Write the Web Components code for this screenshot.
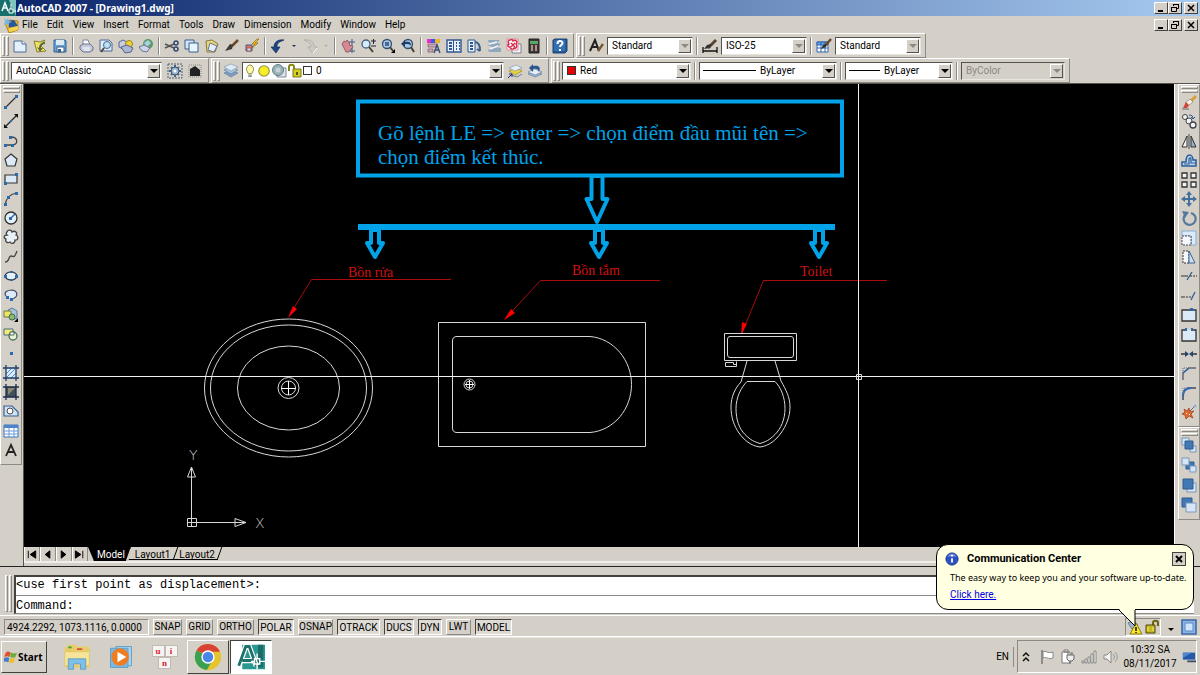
<!DOCTYPE html>
<html lang="en">
<head>
<meta charset="utf-8">
<title>AutoCAD 2007 - [Drawing1.dwg]</title>
<style>
  html, body { height: 100%; }
  body {
    margin: 0;
    background: #d4d0c8;
    color: #000;
    font: 10px/12px Roboto, "Liberation Sans", Arial, sans-serif;
  }
</style>
</head>
<body>
<cad-app></cad-app>

<script>
const ICONS = {
  // standard toolbar
  new: '<path d="M2 3h8l4 3v8H2z" fill="#e4f0fc" stroke="#4a6a94"/><path d="M10 3v3h4" fill="#fff" stroke="#4a6a94"/>',
  open: '<path d="M2 3l6 1 5-2-4 6 5 5-9 1z" fill="#f0e06a" stroke="#8a8030"/><path d="M13 4c-4 0-6 3-6 6l-2-1 3 5 3-4H9c0-2 1-4 4-4z" fill="#5c6a30"/>',
  save: '<path d="M2 2h11l1 1v11H2z" fill="#6aa0d8" stroke="#38608e"/><path d="M4 2h8v5H4z" fill="#dceaf6"/><path d="M5 9h7v5H5z" fill="#fff" stroke="#38608e"/><path d="M6 11h3v3H6z" fill="#38608e"/>',
  plot: '<path d="M5 2h5l2 5H5z" fill="#fff" stroke="#7a86a0"/><path d="M2 8l3-2h7l3 3v3l-3 2H5l-3-3z" fill="#c4cadc" stroke="#6a7698"/><path d="M5 10h7M6 12h6" stroke="#fff"/>',
  preview: '<path d="M2 2h9l3 3v8H2z" fill="#dceafa" stroke="#4a6a94"/><circle cx="9" cy="7" r="3.500" fill="#bfe0f6" stroke="#4b6a84"/><path d="M6 10l-3 4" stroke="#5a4632" stroke-width="2"/>',
  publish: '<path d="M1 4l4-2 4 2 1 4-5 3-4-2z" fill="#c9cfe0" stroke="#56658c"/><circle cx="11" cy="6" r="3.500" fill="#f2d230" stroke="#9a8420"/><path d="M3 9l6-2 6 3-2 4-6 1z" fill="#aab6d2" stroke="#56658c"/>',
  dwf: '<circle cx="10" cy="6" r="5" fill="#5c9a68"/><path d="M6 5l4-3 3 3-4 4z" fill="#a8d0e0"/><path d="M1 9l5-2 6 3-3 4-5-1z" fill="#cdd6e8" stroke="#6a7698"/>',
  cut: '<path d="M1 6l9 4M1 10l9-4" stroke="#555" stroke-width="1.500"/><circle cx="12" cy="5" r="2" fill="none" stroke="#304a70" stroke-width="1.500"/><circle cx="12" cy="11" r="2" fill="none" stroke="#304a70" stroke-width="1.500"/>',
  copy: '<path d="M1 2h9v9H1z" fill="#d4e4f8" stroke="#38608e"/><path d="M5 5h9v9H5z" fill="#e8f4ff" stroke="#38608e"/>',
  paste: '<path d="M2 3l6-1 6 4-3 8H3z" fill="#e8d878" stroke="#86793a"/><path d="M6 5l7 3-3 6-6-2z" fill="#e4eefa" stroke="#6a7698"/>',
  brush: '<path d="M14 2l-6 6" stroke="#6a4a28" stroke-width="2.500"/><path d="M9 7L6 6l-5 7 7-2z" fill="#3e3a34"/>',
  block: '<path d="M13 1L8 6h3L7 11l7-6h-3l4-4z" fill="#f6cc1c" stroke="#8e6410" stroke-width=".7"/><path d="M2 7h6v6H2z" fill="#e8735a" stroke="#3c5c94"/><path d="M3 10h4v3H3z" fill="#c9d8ee" stroke="#9a4530" stroke-width=".7"/>',
  undo: '<path d="M14 2C8 1 4 4 4 9H1l5 6 4-6H7c0-4 2-5 7-7z" fill="#1c4480" stroke="#12305c" stroke-width=".7"/>',
  redo: '<path d="M2 2c7-1 10 2 10 7h3l-5 6-4-6h3c0-4-2-5-7-7z" fill="#cfccc4" stroke="#a8a59e" stroke-width=".7"/><path d="M15 10l-4 5" stroke="#fff"/>',
  pan: '<path d="M2 6l2-3 2 1 1-2 2 2 1 4 2-1 1 2-4 5H6z" fill="#d48a92" stroke="#8e4650" stroke-width=".8"/><path d="M12 1v6M9 4h6M12 10v5M10 13h5" stroke="#3c5a88"/>',
  zoom: '<circle cx="6" cy="6" r="4" fill="#d6ecfa" stroke="#4b5f78" stroke-width="1.300"/><path d="M9 9l4 5" stroke="#4a4036" stroke-width="2"/><path d="M11 3h5M13.500 1v5M11 8h5" stroke="#223"/>',
  zoomWindow: '<circle cx="7" cy="6" r="4.500" fill="#a8c8e8" stroke="#34506e" stroke-width="1.300"/><path d="M5 4h4v4H5z" fill="#4a6a94"/><path d="M10 9l3 4" stroke="#4a4036" stroke-width="2"/><path d="M15 11v4h-4z" fill="#000"/>',
  zoomBack: '<circle cx="8" cy="6" r="4.500" fill="#a8c8e8" stroke="#34506e" stroke-width="1.300"/><path d="M1 6l4-4v2c5-1 6 1 6 4-1-2-3-2-6-2v3z" fill="#1f3c66"/><path d="M11 9l3 5" stroke="#4a4036" stroke-width="2"/>',
  props: '<path d="M1 1h4v4H1z" fill="#e62ec8"/><path d="M5 1h4v4H5z" fill="#3c5ae0"/><path d="M9 1h5v4H9z" fill="#efb02c"/><path d="M2 6h9v3H2zM2 11h5v3H2z" fill="#c8aab8" stroke="#80526a" stroke-width=".7"/><path d="M8 15l3-8 3 8M9 12h4" fill="none" stroke="#3a4a70" stroke-width="1.400"/>',
  design: '<path d="M1 2h14v12H1z" fill="#e6f0fc" stroke="#2f568e" stroke-width="1.400"/><path d="M7.500 2v12" stroke="#2f568e"/><path d="M3 5h3M3 8h3M3 11h3M10 5h1M13 5h1M10 8h1M13 8h1M10 11h1M13 11h1" stroke="#2f568e" stroke-width="2"/>',
  palettes: '<path d="M2 2h7v12H2z" fill="#e6f0fc" stroke="#2f568e"/><path d="M4 5h3M4 8h3M4 11h3" stroke="#2f568e" stroke-width="2"/><path d="M9 4c3 0 5 3 5 9M14 13l-3-2" fill="none" stroke="#38608e" stroke-width="2"/>',
  sheets: '<path d="M2 2h12l-3 3H3zM1 7l10-2 4 1-6 4zM2 12l8-3 5 1v4H3z" fill="#8fa8bc"/><path d="M3 6l8-2M4 11l8-3" stroke="#eef4fa" stroke-width="1.500"/>',
  markup: '<path d="M6 6h9v9H6z" fill="#f2f2f2" stroke="#7a8298"/><path d="M1 1h11v11H1z" fill="#fff" stroke="#d88a98"/><path d="M4 2c2-1 3 0 3 1 3-2 5 1 3 3 2 2 0 5-2 4-1 2-4 1-4-1-2 0-3-2-1-3-1-2-1-4 1-4zM5 5l4 4M9 5L5 9" fill="none" stroke="#d82a4a" stroke-width="1.400"/>',
  calc: '<path d="M3 1h10v14H3z" fill="#3c3838" stroke="#222"/><path d="M4 3h8v3H4z" fill="#58a868"/><path d="M5 8h2M9 8h2M5 10h2M9 10h2M5 12h2M9 12h2" stroke="#dcb0a0" stroke-width="1.300"/>',
  help: '<path d="M1 2l2-1h12v12l-2 2H1z" fill="#245a98" stroke="#1c4474"/><path d="M2 2h11v11H2z" fill="#3470b4"/><path d="M5.500 6c0-4 5-3.500 5-1 0 2-2.500 2-2.500 4" fill="none" stroke="#fff" stroke-width="2"/><path d="M7 11h2v2H7z" fill="#fff"/>',
  textStyle: '<path d="M2 13L7 2l4 11M4 9h6" fill="none" stroke="#222" stroke-width="2"/><path d="M15 6l-5 7" stroke="#7a5834" stroke-width="2.500"/>',
  dimStyle: '<path d="M14 2L6 10" stroke="#5a4630" stroke-width="3"/><path d="M9 6L5 7l-3 4 6-1z" fill="#333"/><path d="M1 9v6M15 9v6M1 13h14" stroke="#111" stroke-width="1.300"/>',
  tableStyle: '<path d="M1 4h11v10H1z" fill="#fff" stroke="#2f66ae"/><path d="M1 4h11v3H1zM5 4v10M9 4v10M1 10h11" fill="#6a9ade" stroke="#2f66ae"/><path d="M15 1L9 8" stroke="#6a4a28" stroke-width="2.500"/><path d="M10 6l-3 1-2 4 5-2z" fill="#333"/>',
  // layers toolbar
  gear: '<path d="M1 1h14v14H1z" fill="none" stroke="#46627e" stroke-dasharray="2 1"/><path d="M8 2v12M2 8h12M4 4l8 8M12 4l-8 8" stroke="#4a6484" stroke-width="2"/><circle cx="8" cy="8" r="4" fill="#9cb6cc" stroke="#3c5674"/><circle cx="8" cy="8" r="1.500" fill="#fff"/>',
  myWorkspace: '<path d="M2 2h12v12H2z" fill="none" stroke="#888" stroke-dasharray="1 1"/><path d="M3 6l5-3 5 4v6H3z" fill="#222"/>',
  layers: '<path d="M1 10l7-3 7 3-7 4z" fill="#7f9fc0" stroke="#58789a" stroke-width=".6"/><path d="M1 7l7-3 7 3-7 4z" fill="#a8c2dc" stroke="#58789a" stroke-width=".6"/><path d="M1 4l7-3 7 3-7 4z" fill="#e0ebf5" stroke="#7890aa" stroke-width=".6"/>',
  layerCurrent: '<path d="M2 8l7-3 6 3-7 4z" fill="#e4d23c" stroke="#8a7c20" stroke-width=".6"/><path d="M2 5l7-3 6 3-7 3z" fill="#e6eef6" stroke="#7890aa" stroke-width=".6"/><path d="M4 12l6 2 5-3" fill="none" stroke="#6d8198"/><path d="M1 15l4-4M2 11h3v3" fill="none" stroke="#222a80"/>',
  layerBack: '<path d="M1 11l7-3 7 3-7 3z" fill="#9cb6d0" stroke="#58789a" stroke-width=".6"/><path d="M1 9l7-3 7 3-7 3z" fill="#e6eef6" stroke="#58789a" stroke-width=".6"/><path d="M6 1L2 5l4 4V6c4-1 5 0 6 3 2-5 0-7-6-6z" fill="#2d568e"/>',
  bulb: '<path d="M8 1a5 5 0 0 1 3 8l-1 2H6L5 9a5 5 0 0 1 3-8z" fill="#fdf9a8" stroke="#8a8440"/><path d="M6 12h4v3H6z" fill="#9a9a94"/>',
  sun: '<circle cx="8" cy="8" r="6" fill="#f8ee28" stroke="#94903c" stroke-width="1.300"/>',
  vpFreeze: '<path d="M6 5h9v9H6z" fill="#dfe4ea" stroke="#7e8c9a"/><circle cx="7" cy="7" r="5.500" fill="#98b2b8" stroke="#64808a"/><circle cx="7" cy="7" r="2.500" fill="#c6d4d4"/>',
  unlock: '<path d="M2 8V4c0-3 5-3 5 0v3" fill="none" stroke="#8a8618" stroke-width="2"/><path d="M6 6h8v8H6z" fill="#d8d020" stroke="#77741a"/><path d="M9 9h2v3H9z" fill="#5a5810"/>',
  // draw toolbar
  line: '<path d="M3 13L13 3" stroke="#333" stroke-width="1.200"/><path d="M1 12h3v3H1zM12 1h3v3h-3z" fill="#2c6ab0"/>',
  xline: '<path d="M2 14L14 2" stroke="#222" stroke-width="1.300"/><path d="M1 15v-4l4 4zM15 1v4l-4-4z" fill="#111"/><path d="M7 7h2v2H7z" fill="#2c6ab0"/>',
  pline: '<path d="M2 12h7M9 12c7 0 6-8-1-8" fill="none" stroke="#444" stroke-width="1.300"/><path d="M1 11h3v3H1zM8 11h3v3H8zM6 3h3v3H6z" fill="#2c6ab0"/>',
  polygon: '<path d="M8 2l6 5-2 7H4L2 7z" fill="#dceaf8" stroke="#333" stroke-width="1.200"/>',
  rect: '<path d="M2 4h12v8H2z" fill="#dceaf8" stroke="#333" stroke-width="1.200"/><path d="M1 11h3v3H1zM12 2h3v3h-3z" fill="#2c6ab0"/>',
  arc: '<path d="M2 14C3 7 7 3 14 2" fill="none" stroke="#444" stroke-width="1.200"/><path d="M1 12h3v3H1zM4 5h3v3H4zM12 1h3v3h-3z" fill="#2c6ab0"/>',
  circle: '<circle cx="8" cy="8" r="6" fill="#e4f0fa" stroke="#333" stroke-width="1.300"/><path d="M8 8l4-4" stroke="#2c6ab0" stroke-width="1.500"/><path d="M6 7h3v3H6z" fill="#2c6ab0"/>',
  cloud: '<path d="M4 3c1-3 5-2 5 0 3-2 6 1 4 3 3 1 2 6-1 5 0 4-4 4-5 2-3 2-5-1-4-3-3-1-2-4 1-4-1-1-1-2 0-3z" fill="#e8f0f8" stroke="#444" stroke-width="1.300"/>',
  spline: '<path d="M2 13c5 0 3-6 6-6s3 3 6-5" fill="none" stroke="#444" stroke-width="1.300"/>',
  ellipse: '<ellipse cx="8" cy="8" rx="6" ry="4" fill="#e4f0fa" stroke="#333" stroke-width="1.200"/><path d="M1 7h3v3H1zM12 7h3v3h-3zM7 3h3v2H7zM7 11h3v2H7z" fill="#2c6ab0"/>',
  ellipseArc: '<path d="M3 9C0 5 5 3 9 3c6 1 7 7 0 9" fill="#dceaf8" stroke="#446" stroke-width="1.200"/><path d="M3 9h3v3H3zM7 11h3v3H7z" fill="#2c6ab0"/>',
  insert: '<path d="M5 3l4-2 5 3v7l-5 2z" fill="#a8c4dc" stroke="#58789a"/><path d="M1 4h7v6H1z" fill="#f0e46a" stroke="#6a7a38"/><circle cx="9" cy="10" r="3" fill="#8fb86e" stroke="#406a50"/><path d="M15 11v4h-4z"/>',
  makeBlock: '<path d="M1 3h9v6H1z" fill="#f4ec70" stroke="#446a8a"/><circle cx="10" cy="10" r="4" fill="#e8f0d8" stroke="#446a5a" stroke-width="1.300"/><path d="M7 6h4v3H7z" fill="#fff" stroke="#446a5a"/>',
  point: '<path d="M7 7h3v3H7z" fill="#2c6ab0"/>',
  hatch: '<path d="M3 3h10v10H3z" fill="#dcecfc"/><path d="M3 9l6-6M4 12l8-8M8 13l5-5" stroke="#4c8ccc"/><path d="M3 0v16M13 0v16M0 3h16M0 13h16" stroke="#1e3c66" stroke-width="1.300"/>',
  gradient: '<path d="M3 3h10v10H3z" fill="#444e58"/><path d="M5 4h7L5 11z" fill="#8a8a70"/><path d="M3 0v16M13 0v16M0 3h16M0 13h16" stroke="#1c2c4c" stroke-width="1.300"/>',
  region: '<path d="M1 3h8l6 6v4H1z" fill="#cfe2f6" stroke="#38608e" stroke-width="1.200"/><circle cx="7" cy="8" r="3" fill="#fff" stroke="#444"/>',
  table: '<path d="M1 2h14v12H1z" fill="#fff" stroke="#3b72b8"/><path d="M1 2h14v3H1z" fill="#4c84cc"/><path d="M1 8h14M1 11h14M6 5v9M11 5v9" stroke="#6a9ade"/>',
  mtext: '<path d="M3 14L8 3l5 11M5 10h6" fill="none" stroke="#222" stroke-width="1.800"/>',
  // modify toolbar
  erase: '<path d="M15 2L9 8" stroke="#d8a030" stroke-width="3"/><path d="M9 5l3 3-5 4-3-3z" fill="#f2f0e0" stroke="#777" stroke-width=".6"/><path d="M5 8l3 3-2 3H2z" fill="#d04438"/><path d="M1 15h7" stroke="#666"/>',
  copyObj: '<circle cx="4" cy="4" r="2.500" fill="#eef4fa" stroke="#444"/><circle cx="8" cy="8" r="3" fill="#eef4fa" stroke="#444"/><path d="M8 2c3 0 4 1 4 4M10 4l2 2 2-2" fill="none" stroke="#2a5c98"/><circle cx="12" cy="12" r="3" fill="#eef4fa" stroke="#444" stroke-width="1.300"/>',
  mirror: '<path d="M1 14L6 3v11z" fill="#eef4fa" stroke="#333"/><path d="M15 14L10 3v11z" fill="#8fb0d0" stroke="#333"/><path d="M8 1v15" stroke="#444"/>',
  offset: '<path d="M1 14v-4h4c0-10 7-8 7-2h3v6z" fill="#bcd4ec" stroke="#2a5c98" stroke-width="1.500"/><path d="M3 12h5V7c1-2 2-1 2 0v4h5" fill="none" stroke="#2a5c98" stroke-width="1.200"/>',
  array: '<path d="M1 1h5v5H1zM10 1h5v5h-5zM1 10h5v5H1zM10 10h5v5h-5z" fill="#eef4fa" stroke="#333" stroke-width="1.300"/>',
  move: '<path d="M8 0l3 4H9v3h3V5l4 3-4 3V9H9v3h2l-3 4-3-4h2V9H4v2L0 8l4-3v2h3V4H5z" fill="#44709e"/>',
  rotate: '<path d="M4 5a6 6 0 1 0 6-2" fill="none" stroke="#54789e" stroke-width="2.200"/><path d="M1 1l7 1-4 6z" fill="#54789e"/>',
  scale: '<path d="M1 1h14v14h-5V6H1z" fill="#dceaf8" stroke="#8cacd0"/><path d="M1 6h9v9H1z" fill="#f4f8fc" stroke="#445" stroke-dasharray="2 1"/>',
  stretch: '<path d="M2 2h6v12H2z" fill="#f4f8fc" stroke="#333" stroke-dasharray="2 1"/><path d="M8 2l6 12H8z" fill="#cfe0f2" stroke="#3b628e"/>',
  trim: '<path d="M0 8h7" stroke="#333"/><path d="M9 8h7" stroke="#333" stroke-dasharray="2 1"/><path d="M6 12l5-8" stroke="#2a5c98" stroke-width="1.300"/>',
  extend: '<path d="M0 9h4" stroke="#333"/><path d="M5 9h5" stroke="#333" stroke-dasharray="2 1"/><path d="M10 12l4-8" stroke="#2a5c98" stroke-width="1.300"/>',
  breakAt: '<path d="M1 3h14v11H1z" fill="#dceaf8" stroke="#333" stroke-width="1.300"/><path d="M9 1h3v3H9z" fill="#2c6ab0"/>',
  break: '<path d="M5 3H1v11h14V3h-4" fill="#dceaf8" stroke="#333" stroke-width="1.300"/><path d="M4 1h2v3H4zM10 1h2v3h-2z" fill="#2c6ab0"/>',
  join: '<path d="M0 8h5M11 8h5" stroke="#333" stroke-width="1.300"/><path d="M4 5l4 3-4 3zM12 5L8 8l4 3z" fill="#24466c"/>',
  chamfer: '<path d="M2 15V8l6-5h7" fill="none" stroke="#667" stroke-width="1.500"/><path d="M2 8V3h6" fill="none" stroke="#667" stroke-dasharray="1 1"/><path d="M2 8l6-5" stroke="#2c6ab0" stroke-width="1.500"/>',
  fillet: '<path d="M2 15v-4c0-5 3-8 8-8h5" fill="none" stroke="#446" stroke-width="1.500"/><path d="M2 11c0-5 3-8 8-8" fill="none" stroke="#2c6ab0" stroke-width="2"/><path d="M2 8V3h5" fill="none" stroke="#778" stroke-dasharray="1 1"/>',
  explode: '<path d="M3 5l3 2 2-3 1 4 4-1-3 3 2 4-4-2-3 3-1-4-3-1 3-2z" fill="#e06a2c" stroke="#a03818" stroke-width=".7"/><path d="M5 9h1v1H5zM8 10h1v1H8z" fill="#fff"/><path d="M9 7l5-5" stroke="#668"/><circle cx="14" cy="2" r="1.500" fill="#8fb0d0"/>',
  front: '<path d="M1 1h7v7H1zM9 9h6v6H9z" fill="#d6e6f6" stroke="#7896b8"/><path d="M4 4h8v8H4z" fill="#4278b4" stroke="#2f5c90"/>',
  back: '<path d="M5 5h8v7H5z" fill="#4278b4" stroke="#2f5c90"/><path d="M1 1h7v7H1zM9 9h6v6H9z" fill="#d6e6f6" stroke="#7896b8"/>',
  above: '<path d="M6 6h9v9H6z" fill="#d6e6f6" stroke="#7896b8"/><path d="M2 2h10v10H2z" fill="#4278b4" stroke="#2f5c90"/>',
  under: '<path d="M1 1h10v9H1z" fill="#4278b4" stroke="#2f5c90"/><path d="M5 6h10v9H5z" fill="#d6e6f6" stroke="#7896b8"/>',
  // window furniture
  logo: '<path d="M0 0h16v16H0z" fill="#18706e"/><path d="M9 0h7v16z" fill="#7cc4bc"/><path d="M2 11L5 3l3 8M3 8h4" fill="none" stroke="#fff" stroke-width="1.500"/><path d="M9 9h4v4H9zM11 4v5M13 11h3" fill="none" stroke="#fff"/>',
  drawing: '<path d="M2 6l5-3 8 1v9l-9 3z" fill="#f0b820" stroke="#a87810" stroke-width=".8"/><path d="M5 4l6-1 4 6-9 2z" fill="#2c569a"/><path d="M6 11l9-2v4l-9 2z" fill="#f6d050"/><path d="M1 1l2 2 2-2 1 3 3 1-3 1v3L4 7 1 8l1-3z" fill="#7ab8e0"/>',
  info: '<circle cx="8" cy="8" r="7" fill="#2c50c0" stroke="#1c3a90"/><path d="M3 5a6 6 0 0 1 10 0" fill="#7c9ae8"/><path d="M8 3v2M8 7v5" stroke="#fff" stroke-width="2"/>',
  warning: '<path d="M2 4l5-2 5 4-6 4z" fill="#9cb6cc" stroke="#67829c"/><path d="M10 4l6 11H4z" fill="#f8e428" stroke="#8e7c10"/><path d="M10 8v4M10 13v1" stroke="#111" stroke-width="1.500"/>',
  padlock: '<path d="M9 7V4c0-3 5-3 5 0v3" fill="none" stroke="#6a6410" stroke-width="2"/><path d="M2 6h9v8H2z" fill="#c8b820" stroke="#4d4908"/><path d="M4 8v4M9 8v4" stroke="#f4ec8c"/>',
  cleanScreen: '<path d="M1 1h14v14H1z" fill="#8ab4e4" stroke="#3c6aa8" stroke-width="1.600"/><path d="M4 4h8v8H4z" fill="#cfe4fa" stroke="#5c8ac4"/>',
  // taskbar
  windows: '<path d="M2 3c2-2 3-1 6 0L6 8C4 7 3 7 0 8z" fill="#e0512a"/><path d="M8 3c3 1 5 1 7 0l-2 5c-2 1-4 1-6 0z" fill="#6cae3a"/><path d="M0 9c3-1 4-1 6 0l-1 5c-2-1-4-1-6 0z" fill="#3c7cc8"/><path d="M7 9c2 1 4 1 6 0l-2 5c-2 1-4 1-5 0z" fill="#f0bc28"/>',
  explorer: '<path d="M1 3l2-2h4l1 1h7v12H1z" fill="#e8cc68"/><path d="M1 5h13l1-1v9H1z" fill="#f6e49a" stroke="#d8b850" stroke-width=".3"/><path d="M3 2h2v1H3z" fill="#42a040"/><path d="M8 3h3v1H8z" fill="#d8503c"/><path d="M3 15V9h10v6h-3v-3H6v3z" fill="#7cc0e8" stroke="#5090bc" stroke-width=".4"/>',
  media: '<path d="M5 2h9v11H5z" fill="#a8d4f0" stroke="#5c9cc4" stroke-width=".5"/><path d="M2 3h10v11H2z" fill="#78b8e4" stroke="#5c9cc4" stroke-width=".5"/><circle cx="7.500" cy="8" r="5" fill="#ee7c20"/><path d="M6 5l5 3-5 3z" fill="#fff"/>',
  chrome: '<circle cx="8" cy="8" r="7.500" fill="#e8c42c"/><path d="M8 8L1.500 4.200A7.500 7.500 0 0 1 14.800 5H8z" fill="#da4334"/><path d="M1.500 4.200a7.500 7.500 0 0 0 5.800 11.250L10.500 10z" fill="#3aa052"/><circle cx="8" cy="8" r="3.800" fill="#fff"/><circle cx="8" cy="8" r="3" fill="#4a86e8"/>',
  acad: '<path d="M3 1h13v14H3z" fill="#2a9890"/><path d="M12 1h3v13h-3z" fill="#1c6c68"/><path d="M1 13L5 2h2l4 11M3 10h6" fill="none" stroke="#fff" stroke-width="3"/><path d="M1 13L5 2h2l4 11M3 10h6" fill="none" stroke="#1d706c" stroke-width="1.600"/><path d="M10 9h3v3h-3zM11.500 6v3M11.500 12v3M8 10.500h2M13 10.500h3" fill="none" stroke="#fff" stroke-width=".8"/>',
  chevrons: '<path d="M5 7l3-3 3 3M5 12l3-3 3 3" fill="none" stroke="#111" stroke-width="1.500"/>',
  flag: '<path d="M3 1v14" stroke="#777" stroke-width="1.500"/><path d="M4 3c3-2 4 2 10 0v6c-5 2-6-2-10 0z" fill="#fff" stroke="#888"/>',
  power: '<path d="M2 3h8v11H2zM4 1h4v2H4z" fill="#fff" stroke="#777"/><path d="M7 6h7v4l-2 2H9l-2-2zM8 3v3M12 3v3M10 12v3" fill="#eee" stroke="#666"/>',
  network: '<path d="M1 12h2v2H1zM4 10h2v4H4zM7 8h2v6H7zM10 5h2v9h-2zM13 2h2v12h-2z" fill="#f4f4f0" stroke="#777" stroke-width=".8"/>',
  sound: '<path d="M2 6h3l4-4v12l-4-4H2z" fill="#f4f4f0" stroke="#888"/><path d="M11 5c2 2 2 4 0 6M13 3c3 3 3 7 0 10" fill="none" stroke="#999"/>',
  desktop: '<path d="M1 3h14v8H1z" fill="#2458a8"/><path d="M1 3h10L1 9z" fill="#4c88d0"/><path d="M6 12h10v2H6z" fill="#384c6c"/>'
};

// Base class: clones the element's template into an open shadow root
class CadElement extends HTMLElement {
  constructor() {
    super();
    const tpl = document.createElement('template');
    tpl.innerHTML = `
      <style>
        :host { display: block; box-sizing: border-box; }
        *, *::before { box-sizing: border-box; }
        button { font: inherit; color: inherit; margin: 0; padding: 0; background: #d4d0c8; border: 0; }
      </style>
      ${this.render()}`;
    this.attachShadow({ mode: 'open' }).appendChild(tpl.content.cloneNode(true));
  }

  render() { return '<slot></slot>'; }
}

class CadIcon extends CadElement {
  render() {
    return `
      <style>
        :host { flex: none; width: 16px; height: 16px; }
        svg { display: block; width: 100%; height: 100%; }
      </style>
      <svg viewBox="0 0 16 16" aria-hidden="true">${ICONS[this.getAttribute('name')] || ''}</svg>`;
  }
}

class ToolButton extends CadElement {
  render() {
    const icon = this.getAttribute('icon');
    return `
      <style>
        :host { flex: none; width: 20px; }
        button { width: 100%; display: flex; justify-content: center; align-items: center; }
        button:hover { outline: 1px solid #fff; }
      </style>
      <button type="button" aria-label="${icon}"><cad-icon name="${icon}"></cad-icon></button>`;
  }
}

// Small black triangle beside undo and redo
class DropArrow extends CadElement {
  render() {
    return `
      <style>
        :host { flex: none; width: 12px; color: #16305c; }
        :host([disabled]) { color: #b4b0a8; }
        button { display: flex; justify-content: center; width: 100%; color: inherit; }
        i { border: 2px solid transparent; border-top-color: currentColor; border-bottom: 0; }
      </style>
      <button type="button" aria-label="history"><i></i></button>`;
  }
}

class ToolSep extends CadElement {
  render() {
    return `
      <style>
        :host { flex: none; width: 2px; height: 18px; margin: 0 2px; background: #8c8a84; border-right: 1px solid #fff; }
      </style>`;
  }
}

class ToolBar extends CadElement {
  render() {
    return `
      <style>
        :host {
          display: flex; align-items: center; flex: none; height: 25px; padding-right: 3px;
          border: 1px solid; border-color: #fff #8c8a84 #8c8a84 #fff;
        }
        .grip { width: 8px; height: 20px; margin-right: 1px; display: flex; gap: 1px; padding-left: 1px; }
        .grip i { width: 3px; border: 1px solid; border-color: #fff #8c8a84 #8c8a84 #fff; }
      </style>
      <div class="grip"><i></i><i></i></div>
      <slot></slot>`;
  }
}

class ComboBox extends CadElement {
  render() {
    const off = this.hasAttribute('disabled') ? 'disabled' : '';
    return `
      <style>
        :host {
          flex: none; display: flex; align-items: center; height: 18px; background: #fff;
          border: 1px solid; border-color: #55534e #e8e6e0 #e8e6e0 #55534e; margin: 0 1px;
        }
        :host([disabled]) { background: #d4d0c8; color: #8c8a84; }
        select {
          appearance: none; flex: 1; min-width: 0; height: 16px; border: 0; padding: 0 4px;
          background: transparent; font: inherit; color: inherit; opacity: 1; outline: 0;
        }
        .arrow {
          width: 13px; height: 14px; margin-right: 1px; background: #d4d0c8; display: flex;
          align-items: center; justify-content: center; pointer-events: none;
          border: 1px solid; border-color: #fff #55534e #55534e #fff;
        }
        .arrow i { border: 4px solid transparent; border-top-color: #000; border-bottom: 0; }
        :host([dim]) .arrow i, :host([disabled]) .arrow i { border-top-color: #8c8a84; }
      </style>
      <slot></slot>
      <select aria-label="${this.getAttribute('label')}" ${off}><option>${this.getAttribute('value')}</option></select>
      <span class="arrow"><i></i></span>`;
  }
}

// Minimize / restore / close group
class WindowButtons extends CadElement {
  render() {
    return `
      <style>
        :host { display: flex; padding-right: 2px; }
        button {
          width: 14px; height: 12px; display: grid; place-items: center;
          border: 1px solid; border-color: #fff #44423e #44423e #fff;
        }
        button:last-child { margin-left: 2px; }
        svg { width: 10px; height: 10px; display: block; }
      </style>
      <button type="button" aria-label="Minimize"><svg viewBox="0 0 10 10"><path d="M2 8h5" stroke="#000" stroke-width="2"/></svg></button>
      <button type="button" aria-label="Restore"><svg viewBox="0 0 10 10"><path d="M3.500 3V1.500h5v4H7M3 1.500h6M1.500 4.500h5v4h-5zM1 4.500h6" fill="none" stroke="#000"/></svg></button>
      <button type="button" aria-label="Close"><svg viewBox="0 0 10 10"><path d="M2 2l6 6M8 2L2 8" stroke="#000" stroke-width="1.500"/></svg></button>`;
  }
}

class TitleBar extends CadElement {
  render() {
    return `
      <style>
        :host {
          display: flex; align-items: center; gap: 1px; height: 16px;
          background: linear-gradient(90deg, #0a246a, #a6caf0); color: #fff;
          font: bold 10px/16px "Noto Sans", sans-serif;
        }
        span { flex: 1; white-space: nowrap; }
      </style>
      <cad-icon name="logo"></cad-icon>
      <span><slot></slot></span>
      <window-buttons></window-buttons>`;
  }
}

class MenuBar extends CadElement {
  render() {
    const menus = ['File', 'Edit', 'View', 'Insert', 'Format', 'Tools', 'Draw', 'Dimension', 'Modify', 'Window', 'Help'];
    return `
      <style>
        :host { display: flex; align-items: center; height: 17px; padding-left: 3px; }
        nav { flex: 1; display: flex; gap: 9px; padding-left: 3px; }
      </style>
      <cad-icon name="drawing"></cad-icon>
      <nav>${menus.map(m => `<button type="button">${m}</button>`).join('')}</nav>
      <window-buttons></window-buttons>`;
  }
}

const tools = names => names.split(' ').map(n => {
  if (n === '|') return '<tool-sep></tool-sep>';
  if (n === 'v') return '<drop-arrow></drop-arrow>';
  if (n === 'x') return '<drop-arrow disabled></drop-arrow>';
  return `<tool-button icon="${n}"></tool-button>`;
}).join('');

class ToolRows extends CadElement {
  render() {
    return `
      <style>
        .row { display: flex; gap: 2px; }
        .w86 { width: 86px; }
        .ws { width: 151px; margin-right: 3px; }
        .layer { width: 262px; }
        .color { width: 129px; }
        .ltype { width: 138px; }
        .lweight { width: 108px; }
        .plot { width: 104px; }
        .swatch { width: 9px; height: 9px; margin-left: 4px; border: 1px solid #333; background: #fff; }
        .red { background: #e80000; }
        .rule { width: 53px; height: 1px; margin-left: 3px; background: #000; }
        .short { width: 31px; }
        .state { width: 14px; height: 14px; }
      </style>
      <div class="row">
        <tool-bar>
          ${tools('new open save | plot preview publish dwf | cut copy paste brush block | undo v redo x | pan zoom zoomWindow zoomBack | props design palettes sheets markup calc | help')}
        </tool-bar>
        <tool-bar>
          ${tools('textStyle')}<combo-box class="w86" dim label="Text style" value="Standard"></combo-box>
          ${tools('| dimStyle')}<combo-box class="w86" dim label="Dimension style" value="ISO-25"></combo-box>
          ${tools('| tableStyle')}<combo-box class="w86" dim label="Table style" value="Standard"></combo-box>
        </tool-bar>
      </div>
      <div class="row">
        <tool-bar>
          <combo-box class="ws" label="Workspace" value="AutoCAD Classic"></combo-box>
          ${tools('gear myWorkspace')}
        </tool-bar>
        <tool-bar>
          ${tools('layers')}
          <combo-box class="layer" label="Layer" value="0">
            <cad-icon class="state" name="bulb"></cad-icon>
            <cad-icon class="state" name="sun"></cad-icon>
            <cad-icon name="vpFreeze"></cad-icon>
            <cad-icon name="unlock"></cad-icon>
            <span class="swatch" style="margin-left: 0"></span>
          </combo-box>
          ${tools('layerCurrent layerBack')}
        </tool-bar>
        <tool-bar>
          <combo-box class="color" label="Color" value="Red"><span class="swatch red"></span></combo-box>
          <tool-sep></tool-sep>
          <combo-box class="ltype" label="Linetype" value="ByLayer"><span class="rule"></span></combo-box>
          <tool-sep></tool-sep>
          <combo-box class="lweight" label="Lineweight" value="ByLayer"><span class="rule short"></span></combo-box>
          <tool-sep></tool-sep>
          <combo-box class="plot" disabled label="Plot style" value="ByColor"></combo-box>
        </tool-bar>
      </div>`;
  }
}

class ToolPalette extends CadElement {
  render() {
    return `
      <style>
        :host {
          display: flex; flex-direction: column; align-items: center; width: 22px; padding-bottom: 6px;
          border: 1px solid; border-color: #fff #8c8a84 #8c8a84 #fff;
        }
        .grip { height: 8px; width: 17px; display: grid; gap: 1px; padding: 1px 0; }
        .grip i { height: 3px; border: 1px solid; border-color: #fff #8c8a84 #8c8a84 #fff; }
        .items { flex: 1; display: flex; flex-direction: column; justify-content: space-between; padding-top: 1px; }
      </style>
      <div class="grip"><i></i><i></i></div>
      <div class="items"><slot></slot></div>`;
  }
}

class DrawingCanvas extends CadElement {
  render() {
    const arrow = x => `<path d="M${x - 4} 230v13h-4l8 14 8-14h-4v-13z"/>`;
    return `
      <style>
        :host { background: #000; overflow: hidden; min-width: 0; min-height: 0; }
        svg { display: block; width: 100%; height: 100%; fill: none; stroke: #d8d8d8; }
        text { stroke: none; font-family: "Liberation Serif", "Times New Roman", serif; }
        .note { fill: #00a2e8; font-size: 21px; }
        .label { fill: #d01010; font-size: 14px; }
        .axis { fill: #c8c8c8; font: 14px "DejaVu Sans", sans-serif; font-weight: 200; }
        .cyan { stroke: #00a2e8; stroke-width: 4; }
        .leader { stroke: #a80c0c; }
        .head { fill: #ff0000; stroke: none; }
      </style>
      <svg>
        <g transform="translate(-24 -84)">
          <g class="cyan">
            <path d="M358 101.500h484v74H358z"/>
            <path d="M358 227h477" stroke-width="6"/>
            <path d="M591.500 176v23h-5l10.500 23 10.500-23h-5v-23z" stroke-linejoin="round"/>
            <g stroke-linejoin="round">${arrow(375)}${arrow(599)}${arrow(819)}</g>
          </g>
          <text class="note" x="378" y="140">Gõ lệnh LE =&gt; enter =&gt; chọn điểm đầu mũi tên =&gt;</text>
          <text class="note" x="378" y="164">chọn điểm kết thúc.</text>

          <text class="label" x="348" y="277">Bồn rửa</text>
          <text class="label" x="572" y="275">Bồn tắm</text>
          <text class="label" x="800" y="276">Toilet</text>
          <g class="leader">
            <path d="M451 279.500H311.500L289 316"/>
            <path d="M660 280.500H540.500L505 319"/>
            <path d="M887 280.500H763.500L742 333"/>
          </g>
          <g class="head">
            <path d="M288 318l5-12 4 3z"/>
            <path d="M504 320l7-11 4 4z"/>
            <path d="M741 335l1-13 5 2z"/>
          </g>

          <!-- basin -->
          <ellipse cx="288.500" cy="388" rx="84" ry="69"/>
          <ellipse cx="288.500" cy="388" rx="78" ry="63"/>
          <ellipse cx="288.500" cy="388" rx="51" ry="42"/>
          <circle cx="288.500" cy="388" r="10.500"/>
          <circle cx="288.500" cy="388" r="7"/>
          <path d="M288.500 381v14M281 388.500h15" stroke="#fff"/>

          <!-- bathtub -->
          <path d="M438.500 322.500h207v124h-207z"/>
          <path d="M457 336.500h133c24 2 41.500 24 41.500 48s-17 46-41.500 48H457q-4.500 0-4.500-4.500v-87q0-4.500 4.500-4.500z"/>
          <circle cx="469.500" cy="384.500" r="5.500"/>
          <circle cx="469.500" cy="384.500" r="3.500"/>
          <path d="M469.500 380v9M465 384.500h9" stroke="#fff"/>

          <!-- toilet -->
          <path d="M724.500 333.500h72v27h-72z"/>
          <path d="M730 336.500h61q2.500 0 2.500 2.500v16q0 2.500-2.500 2.500h-61q-2.500 0-2.500-2.500v-16q0-2.500 2.500-2.500z"/>
          <path d="M725.500 362.500h8v2h3v-3M725.500 362.500v4h11v-4"/>
          <path d="M747 361l-6 21c-6 6-10 15-10 25s3 19 8 26 12 13 21 14c9-1 16-7 21-14s9-16 9-26-4-17-9-26l-6-20"/>
          <path d="M747 381.500h28c6 6 10 16 10 27s-4 20-10 26-9 7-15 9c-6-2-9-3-15-9s-9-15-9-26 5-21 11-27z"/>

          <!-- crosshair -->
          <path d="M858.500 84v800M0 376.500h3000" stroke="#f0f0f0" shape-rendering="crispEdges"/>
          <path d="M856.500 374.500h5v5h-5z"/>

          <!-- UCS -->
          <path d="M187.500 518.500h9v8h-9zM191.500 527V467l4 10h-8l4-10M187 522.500h59l-11-4v8l11-4"/>
          <text class="axis" x="189" y="460">Y</text>
          <text class="axis" x="255" y="528">X</text>
        </g>
      </svg>`;
  }
}

class LayoutTabs extends CadElement {
  render() {
    const arrows = ['M3 3v8M11 3L5 7l6 4z', 'M9 3L4 7l5 4z', 'M4 3l5 4-5 4z', 'M10 3v8M2 3l6 4-6 4z'];
    return `
      <style>
        :host { display: flex; height: 14px; }
        .nav { width: 16px; display: grid; place-items: center; border-right: 1px solid #8c8a84; border-left: 1px solid #fff; }
        svg { width: 14px; height: 13px; display: block; stroke: #000; }
        .tab { background: none; position: relative; height: 14px; padding: 0 5px 0 4px; z-index: 0; line-height: 13px; }
        .tab::before {
          content: ""; position: absolute; inset: 0 0 1px; z-index: -1; transform: skewX(-20deg);
          border: 1px solid #000; border-width: 0 1px 1px 0;
        }
        .on { color: #fff; padding: 0 6px 0 9px; }
        .on::before { transform: none; inset: 0; background: #000; clip-path: polygon(0 0, 100% 0, calc(100% - 5px) 100%, 6px 100%); }
      </style>
      ${arrows.map(d => `<button type="button" class="nav" aria-label="scroll tabs"><svg viewBox="0 0 14 14"><path d="${d}"/></svg></button>`).join('')}
      <button type="button" class="tab on">Model</button>
      <button type="button" class="tab">Layout1</button>
      <button type="button" class="tab">Layout2</button>`;
  }
}

class CommandWindow extends CadElement {
  render() {
    return `
      <style>
        :host { display: flex; height: 49px; padding: 8px 6px 0 5px; border-top: 1px solid #222; gap: 2px; }
        .grip { width: 7px; height: 37px; display: flex; gap: 1px; }
        .grip i { width: 3px; border: 1px solid; border-color: #fff #8c8a84 #8c8a84 #fff; }
        .log {
          flex: 1; height: 39px; background: #fff;
          border: 2px solid #44423e; border-width: 2px 0 1px 2px; border-bottom-color: #8c8a84;
          font: 12px/16px "Liberation Mono", "Courier New", monospace;
        }
        .history { height: 19px; border-bottom: 1px solid #8c8a84; white-space: nowrap; }
        label { display: flex; line-height: 20px; }
        input { flex: 1; min-width: 0; border: 0; padding: 0; outline: 0; font: inherit; height: 17px; }
      </style>
      <div class="grip"><i></i><i></i></div>
      <div class="log">
        <div class="history">&lt;use first point as displacement&gt;:</div>
        <label>Command:<input type="text"></label>
      </div>`;
  }
}

class StatusBar extends CadElement {
  render() {
    const modes = [['SNAP', 0, 29], ['GRID', 0, 27], ['ORTHO', 0, 37], ['POLAR', 1, 36], ['OSNAP', 0, 35],
      ['OTRACK', 1, 43], ['DUCS', 1, 30], ['DYN', 1, 24], ['LWT', 0, 25], ['MODEL', 1, 37]];
    return `
      <style>
        :host { display: flex; align-items: center; gap: 4px; height: 22px; padding: 2px 3px 0 4px; border-top: 1px solid #fff; border-bottom: 1px solid #fff; }
        .coords { width: 145px; height: 16px; padding-left: 2px; line-height: 15px; border: 1px solid; border-color: #8c8a84 #fff #fff #8c8a84; }
        .modes { flex: 1; display: flex; gap: 4px; }
        .modes button { height: 16px; line-height: 14px; border: 1px solid; border-color: #fff #8c8a84 #8c8a84 #fff; white-space: nowrap; }
        .modes button[aria-pressed=true] { border-color: #44423e #fff #fff #44423e; background: #dedbd5; padding-top: 1px; }
        .tray { display: flex; gap: 2px; align-items: center; border: 1px solid; border-color: #8c8a84 #fff #fff #8c8a84; }
        .menu { width: 12px; display: grid; place-items: center; padding-top: 4px; }
        .menu i { border: 3px solid transparent; border-top-color: #000; border-bottom: 0; }
      </style>
      <div class="coords">4924.2292, 1073.1116, 0.0000</div>
      <div class="modes">
        ${modes.map(([t, on, w]) => `<button type="button" aria-pressed="${!!on}" style="width: ${w}px">${t}</button>`).join('')}
      </div>
      <div class="tray"><cad-icon name="warning"></cad-icon><cad-icon name="padlock"></cad-icon></div>
      <button type="button" class="menu" aria-label="Tray menu"><i></i></button>
      <cad-icon name="cleanScreen"></cad-icon>`;
  }
}

class InfoBalloon extends CadElement {
  render() {
    return `
      <style>
        :host {
          position: absolute; right: 6px; bottom: 65px; width: 258px; height: 66px; padding: 6px 7px 0 8px;
          background: #ffffe1; border: 1px solid #000; border-radius: 12px;
        }
        header { display: flex; align-items: center; gap: 8px; height: 16px; font-weight: bold; font-size: 11px; }
        header span { flex: 1; }
        cad-icon { width: 14px; height: 14px; }
        .close { width: 14px; height: 14px; border: 1px solid #44423e; display: grid; place-items: center; }
        p { margin: 5px 0 5px 5px; white-space: nowrap; font: 9px/12px "Noto Sans", sans-serif; }
        a { margin-left: 5px; color: #0000ee; }
        .tail { position: absolute; left: 181px; top: 64px; width: 20px; height: 18px; }
      </style>
      <header>
        <cad-icon name="info"></cad-icon>
        <span>Communication Center</span>
        <button type="button" class="close" aria-label="Close"><svg width="8" height="8"><path d="M1 1l6 6M7 1L1 7" stroke="#000" stroke-width="2"/></svg></button>
      </header>
      <p><slot></slot></p>
      <a href="#">Click here.</a>
      <svg class="tail" viewBox="0 0 20 18"><path d="M1 0l16 17V0z" fill="#ffffe1"/><path d="M1 1l16 16V1" fill="none" stroke="#000"/></svg>`;
  }
}

class TaskBar extends CadElement {
  render() {
    return `
      <style>
        :host { display: flex; align-items: center; height: 38px; padding: 0 3px 0 1px; border-top: 1px solid #e8e6e0; }
        .start {
          display: flex; align-items: center; gap: 0; width: 46px; height: 32px; padding-left: 2px; font: bold 10px/14px "Noto Sans", sans-serif;
          border: 1px solid; border-color: #fff #44423e #44423e #fff;
        }
        .start cad-icon { width: 14px; height: 14px; }
        .app { width: 43px; height: 34px; display: grid; place-items: center; margin-right: 1px; }
        .app cad-icon { width: 28px; height: 28px; }
        .open { border: 1px solid; border-color: #fff #44423e #44423e #fff; width: 42px; }
        .active { border-color: #44423e #fff #fff #44423e; background: #fff; }
        .keys { display: grid; grid-template-columns: 13px 13px; gap: 0; font: bold 9px/10px "Liberation Serif", serif; color: #d81830; }
        .keys b { background: #f6f4f2; border: 1px solid #c0bcb4; }
        .keys b:last-child { grid-column: 1 / 3; justify-self: center; width: 13px; }
        .apps { flex: 1; display: flex; margin-left: 8px; }
        .lang { padding-right: 4px; margin-right: 3px; line-height: 20px; border-right: 1px solid #8c8a84; }
        .tray { display: flex; align-items: center; height: 33px; gap: 5px; border: 1px solid; border-color: #8c8a84 #fff #fff #8c8a84; }
        .tray cad-icon:last-child { width: 14px; height: 14px; }
        time { width: 54px; text-align: center; line-height: 14px; }
      </style>
      <button type="button" class="start"><cad-icon name="windows"></cad-icon>Start</button>
      <div class="apps">
        <button type="button" class="app" aria-label="Explorer"><cad-icon name="explorer"></cad-icon></button>
        <button type="button" class="app" aria-label="Media Player"><cad-icon name="media"></cad-icon></button>
        <button type="button" class="app" aria-label="UniKey"><span class="keys"><b>u</b><b>i</b><b>n</b></span></button>
        <button type="button" class="app open" aria-label="Chrome"><cad-icon name="chrome"></cad-icon></button>
        <button type="button" class="app open active" aria-label="AutoCAD"><cad-icon name="acad"></cad-icon></button>
      </div>
      <span class="lang">EN</span>
      <div class="tray">
        <cad-icon name="chevrons"></cad-icon>
        <cad-icon name="flag"></cad-icon>
        <cad-icon name="power"></cad-icon>
        <cad-icon name="network"></cad-icon>
        <cad-icon name="sound"></cad-icon>
        <time>10:32 SA<br>08/11/2017</time>
        <cad-icon name="desktop"></cad-icon>
      </div>`;
  }
}

class CadApp extends CadElement {
  render() {
    return `
      <style>
        :host { display: flex; flex-direction: column; height: 100%; min-height: 600px; position: relative; overflow: hidden; }
        main { flex: 1; display: flex; min-height: 0; border-top: 1px solid #55534e; }
        .center { flex: 1; min-width: 0; display: flex; flex-direction: column; margin: 0 3px 0 1px; padding-bottom: 5px; border-left: 1px solid #55534e; border-right: 1px solid #fff; }
        drawing-canvas { flex: 1; }
        layout-tabs { border-bottom: 0; box-shadow: 0 2px 0 #f0eeea; }
        .draw { height: 381px; }
        .modify { height: 343px; }
        .order { height: 93px; }
      </style>
      <title-bar>AutoCAD 2007 - [Drawing1.dwg]</title-bar>
      <menu-bar></menu-bar>
      <tool-rows></tool-rows>
      <main>
        <tool-palette class="draw">${tools('line xline pline polygon rect arc circle cloud spline ellipse ellipseArc insert makeBlock point hatch gradient region table mtext')}</tool-palette>
        <div class="center">
          <drawing-canvas></drawing-canvas>
          <layout-tabs></layout-tabs>
        </div>
        <div>
          <tool-palette class="modify">${tools('erase copyObj mirror offset array move rotate scale stretch trim extend breakAt break join chamfer fillet explode')}</tool-palette>
          <tool-palette class="order">${tools('front back above under')}</tool-palette>
        </div>
      </main>
      <command-window></command-window>
      <status-bar></status-bar>
      <task-bar></task-bar>
      <info-balloon>The easy way to keep you and your software up-to-date.</info-balloon>`;
  }
}

// The constructors read attributes, so every class is defined after the page is parsed
const elements = {
  'cad-icon': CadIcon, 'tool-button': ToolButton, 'drop-arrow': DropArrow, 'tool-sep': ToolSep,
  'tool-bar': ToolBar, 'combo-box': ComboBox, 'window-buttons': WindowButtons, 'title-bar': TitleBar,
  'menu-bar': MenuBar, 'tool-rows': ToolRows, 'tool-palette': ToolPalette, 'drawing-canvas': DrawingCanvas,
  'layout-tabs': LayoutTabs, 'command-window': CommandWindow, 'status-bar': StatusBar,
  'info-balloon': InfoBalloon, 'task-bar': TaskBar, 'cad-app': CadApp
};
for (const [name, cls] of Object.entries(elements)) customElements.define(name, cls);
</script>
</body>
</html>
